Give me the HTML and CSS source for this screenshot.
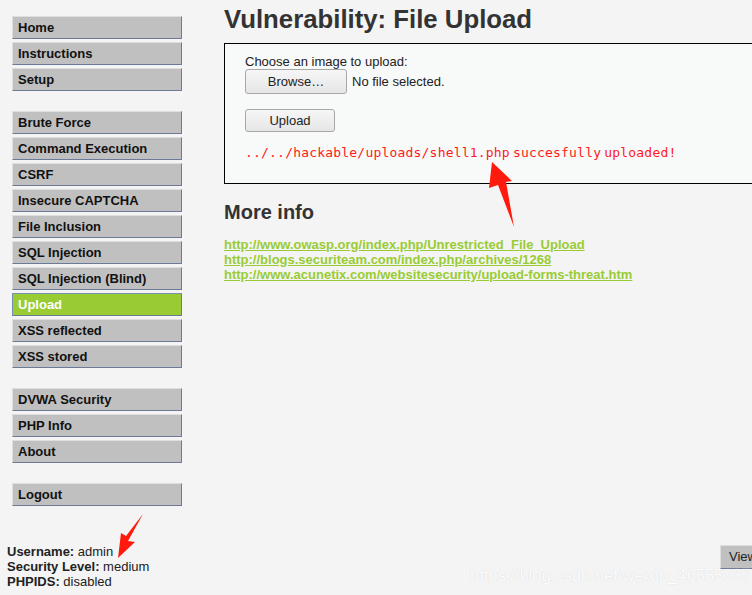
FILE: index.html
```html
<!DOCTYPE html>
<html>
<head>
<meta charset="utf-8">
<link rel="stylesheet" href="styles.css">
</head>
<body>
<div class="page">
  <div class="sidebar">
    <div class="menu">
      <div class="group">
        <div class="item">Home</div>
        <div class="item">Instructions</div>
        <div class="item">Setup</div>
      </div>
      <div class="group">
        <div class="item">Brute Force</div>
        <div class="item">Command Execution</div>
        <div class="item">CSRF</div>
        <div class="item">Insecure CAPTCHA</div>
        <div class="item">File Inclusion</div>
        <div class="item">SQL Injection</div>
        <div class="item">SQL Injection (Blind)</div>
        <div class="item selected">Upload</div>
        <div class="item">XSS reflected</div>
        <div class="item">XSS stored</div>
      </div>
      <div class="group">
        <div class="item">DVWA Security</div>
        <div class="item">PHP Info</div>
        <div class="item">About</div>
      </div>
      <div class="group">
        <div class="item">Logout</div>
      </div>
    </div>
    <div class="userinfo">
      <div><b>Username:</b> admin</div>
      <div><b>Security Level:</b> medium</div>
      <div><b>PHPIDS:</b> disabled</div>
    </div>
  </div>
  <div class="main">
    <h1>Vulnerability: File Upload</h1>
    <div class="vulnerable">
      <div class="label">Choose an image to upload:</div>
      <div class="filerow"><span class="btn browse">Browse…</span><span class="nofile">No file selected.</span></div>
      <div class="btn upload">Upload</div>
      <pre class="result">../../hackable/uploads/shell1.php succesfully uploaded!</pre>
    </div>
    <h2>More info</h2>
    <div class="links">
      <a href="#">http://www.owasp.org/index.php/Unrestricted_File_Upload</a>
      <a href="#">http://blogs.securiteam.com/index.php/archives/1268</a>
      <a href="#">http://www.acunetix.com/websitesecurity/upload-forms-threat.htm</a>
    </div>
  </div>
</div>
<div class="viewbtn">View</div>
<div class="watermark">https://blog.csdn.net/weixin_46555037</div>
<svg class="arrows" width="752" height="595" viewBox="0 0 752 595">
  <polygon fill="#ff1a0d" points="492,162 512,181 506,182 514,227 498,185 489,188"/>
  <polygon fill="#ff1a0d" points="143,514 128,541 135,542 118,558 121,533 126,536"/>
</svg>
</body>
</html>
```
FILE: styles.css
```css
html, body {
  margin: 0;
  padding: 0;
  background: #f4f4f4;
  font-family: "Liberation Sans", Arial, sans-serif;
  font-size: 13px;
  color: #000;
  width: 752px;
  height: 595px;
  overflow: hidden;
}
.page {
  display: flex;
  align-items: flex-start;
}
.sidebar {
  width: 212px;
  padding-left: 12px;
  padding-top: 16px;
  box-sizing: border-box;
  flex: none;
}
.menu {
  display: flex;
  flex-direction: column;
  gap: 20px;
  width: 170px;
}
.group {
  display: flex;
  flex-direction: column;
  gap: 3px;
}
.item {
  height: 21px;
  line-height: 21px;
  background: #c0c0c0;
  border-top: 1px solid #dedede;
  border-left: 1px solid #dedede;
  border-bottom: 1px solid #6b7a96;
  border-right: 1px solid #6b7a96;
  padding-left: 5px;
  font-weight: bold;
  color: #111;
  font-size: 13px;
}
.item.selected {
  background: #99cc33;
  color: #fff;
  border-top-color: #7890b0;
  border-left-color: #7890b0;
}
.userinfo {
  margin-top: 38px;
  margin-left: -5px;
  line-height: 15px;
  color: #222;
}
.userinfo b { color: #222; }
.main {
  flex: 1;
  padding-left: 12px;
}
h1 {
  margin: 4px 0 0 0;
  font-size: 25.75px;
  line-height: 30px;
  color: #333;
  font-weight: bold;
}
.vulnerable {
  margin-top: 9px;
  border: 1px solid #000;
  border-right: none;
  background: #f8f9f9;
  height: 141px;
  box-sizing: border-box;
  padding: 10px 0 0 20px;
  color: #222;
}
.label {
  line-height: 15px;
}
.filerow {
  display: flex;
  align-items: center;
}
.btn {
  display: inline-block;
  box-sizing: border-box;
  border: 1px solid #a8a8a8;
  border-radius: 3px;
  background: linear-gradient(#f6f6f6, #e6e6e6);
  text-align: center;
  color: #222;
}
.browse {
  width: 102px;
  height: 25px;
  line-height: 23px;
}
.nofile {
  margin-left: 5px;
}
.upload {
  margin-top: 15px;
  width: 90px;
  height: 23px;
  line-height: 21px;
}
.result {
  margin: 13px 0 0 0;
  font-family: "DejaVu Sans Mono", monospace;
  font-size: 13px;
  color: #ff1a1a;
  word-spacing: -5px;
  letter-spacing: 0.2px;
}
h2 {
  margin: 16px 0 0 0;
  font-size: 20px;
  line-height: 24px;
  color: #333;
}
.links {
  margin-top: 13px;
  display: flex;
  flex-direction: column;
  line-height: 15px;
}
.links a {
  color: #99cc33;
  font-weight: bold;
  text-decoration: underline;
  align-self: flex-start;
}
.viewbtn {
  position: absolute;
  left: 720px;
  top: 545px;
  width: 50px;
  height: 22px;
  line-height: 22px;
  background: #c0c0c0;
  border-top: 1px solid #dedede;
  border-left: 1px solid #dedede;
  border-bottom: 1px solid #6b7a96;
  padding-left: 8px;
  color: #222;
}
.watermark {
  position: absolute;
  left: 470px;
  top: 566px;
  font-size: 16.5px;
  color: rgba(255,255,255,0.95);
  text-shadow: 0 0 1px #d0d0d0;
}
.arrows {
  position: absolute;
  left: 0;
  top: 0;
  pointer-events: none;
}
```
